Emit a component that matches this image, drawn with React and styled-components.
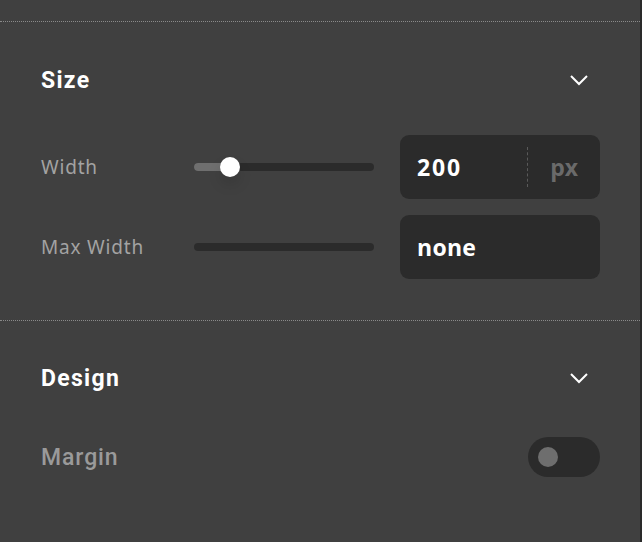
import React from "react";
import styled, { createGlobalStyle } from "styled-components";

const GlobalStyle = createGlobalStyle`
  html, body {
    margin: 0;
    padding: 0;
    background: #404040;
  }
`;

const Panel = styled.div`
  width: 640px;
  height: 521px;
  background: #404040;
  border-right: 2px solid #2a2a2a;
  padding-top: 21px;
  font-family: Roboto, "Liberation Sans", sans-serif;
`;

const Section = styled.section`
  border-top: 1px dotted #8a8a8a;
  padding: ${(p) => p.$top}px 40px ${(p) => p.$bottom}px 41px;
`;

const Header = styled.div`
  display: flex;
  align-items: center;
  justify-content: space-between;
  height: 40px;
  margin-bottom: ${(p) => p.$gap}px;
`;

const Title = styled.h2`
  margin: 0;
  color: #ffffff;
  font-size: 23px;
  font-weight: 700;
  letter-spacing: 1.3px;
`;

const Chevron = styled.svg`
  width: 20px;
  height: 12px;
  margin-right: 11px;
`;

const Rows = styled.div`
  display: flex;
  flex-direction: column;
  gap: 16px;
`;

const Row = styled.div`
  display: grid;
  grid-template-columns: 127px 180px 200px;
  column-gap: 26px;
  align-items: center;
  height: 64px;
`;

const Label = styled.span`
  color: #a3a3a3;
  font-family: "Noto Sans", "Open Sans", sans-serif;
  font-size: 19px;
  letter-spacing: 0.8px;
  white-space: nowrap;
`;

const Track = styled.div`
  position: relative;
  height: 8px;
  border-radius: 4px;
  background: #2b2b2b;
`;

const Fill = styled.div`
  height: 100%;
  border-radius: 4px 0 0 4px;
  background: #6f6f6f;
`;

const Thumb = styled.div`
  position: absolute;
  top: 50%;
  width: 20px;
  height: 20px;
  margin: -10px 0 0 -10px;
  border-radius: 50%;
  background: #ffffff;
  box-shadow: 0 8px 14px rgba(0, 0, 0, 0.12);
`;

const InputBox = styled.div`
  display: flex;
  align-items: center;
  height: 64px;
  border-radius: 9px;
  background: #2b2b2b;
  padding-left: 17px;
  box-sizing: border-box;
`;

const Value = styled.span`
  flex: 1;
  color: #ffffff;
  font-family: "Open Sans", "Liberation Sans", sans-serif;
  font-size: 23px;
  font-weight: 700;
  letter-spacing: ${(p) => (p.$wide ? 1.8 : 0.3)}px;
`;

const Unit = styled.span`
  display: flex;
  align-items: center;
  height: 40px;
  padding: 0 22px 0 22px;
  border-left: 1px dashed #5a5a5a;
  color: #6a6a6a;
  font-family: "Open Sans", "Liberation Sans", sans-serif;
  font-size: 23px;
  font-weight: 700;
`;

const ToggleRow = styled.div`
  display: flex;
  align-items: center;
  justify-content: space-between;
  height: 40px;
`;

const ToggleLabel = styled.span`
  color: #9a9a9a;
  font-size: 23px;
  font-weight: 500;
  letter-spacing: 0.9px;
`;

const Toggle = styled.div`
  display: flex;
  align-items: center;
  width: 72px;
  height: 40px;
  border-radius: 20px;
  background: #2b2b2b;
  padding-left: 10px;
  box-sizing: border-box;
`;

const Knob = styled.div`
  width: 20px;
  height: 20px;
  border-radius: 50%;
  background: #6e6e6e;
`;

function ChevronDown() {
  return (
    <Chevron viewBox="0 0 20 12">
      <path d="M2 2 L10 10 L18 2" fill="none" stroke="#fff" strokeWidth="2" />
    </Chevron>
  );
}

function Slider({ value }) {
  return (
    <Track>
      {value !== null && (
        <>
          <Fill style={{ width: `${value}%` }} />
          <Thumb style={{ left: `${value}%` }} />
        </>
      )}
    </Track>
  );
}

export default function App() {
  return (
    <>
      <GlobalStyle />
      <Panel>
        <Section $top={38} $bottom={41}>
          <Header $gap={35}>
            <Title>Size</Title>
            <ChevronDown />
          </Header>
          <Rows>
            <Row>
              <Label>Width</Label>
              <Slider value={20} />
              <InputBox>
                <Value $wide>200</Value>
                <Unit>px</Unit>
              </InputBox>
            </Row>
            <Row>
              <Label>Max Width</Label>
              <Slider value={null} />
              <InputBox>
                <Value>none</Value>
              </InputBox>
            </Row>
          </Rows>
        </Section>
        <Section $top={37} $bottom={0}>
          <Header $gap={39}>
            <Title>Design</Title>
            <ChevronDown />
          </Header>
          <ToggleRow>
            <ToggleLabel>Margin</ToggleLabel>
            <Toggle>
              <Knob />
            </Toggle>
          </ToggleRow>
        </Section>
      </Panel>
    </>
  );
}
